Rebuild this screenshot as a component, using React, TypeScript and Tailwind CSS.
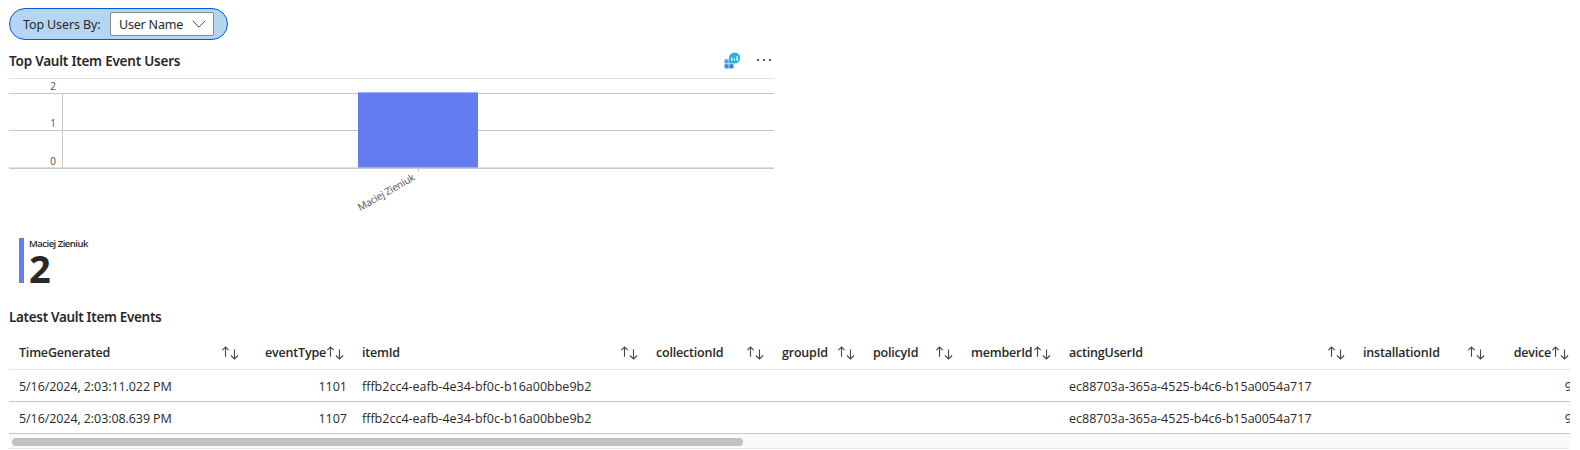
const columns = [
  { name: "TimeGenerated", width: "w-[238px]", numeric: false },
  { name: "eventType", width: "w-[105px]", numeric: true },
  { name: "itemId", width: "w-[294px]", numeric: false },
  { name: "collectionId", width: "w-[126px]", numeric: false },
  { name: "groupId", width: "w-[91px]", numeric: false },
  { name: "policyId", width: "w-[98px]", numeric: false },
  { name: "memberId", width: "w-[98px]", numeric: false },
  { name: "actingUserId", width: "w-[294px]", numeric: false },
  { name: "installationId", width: "w-[140px]", numeric: false },
  { name: "device", width: "w-[84px]", numeric: true },
];

const item = "fffb2cc4-eafb-4e34-bf0c-b16a00bbe9b2";
const user = "ec88703a-365a-4525-b4c6-b15a0054a717";
const rows = [
  ["5/16/2024, 2:03:11.022 PM", "1101", item, "", "", "", "", user, "", "9"],
  ["5/16/2024, 2:03:08.639 PM", "1107", item, "", "", "", "", user, "", "9"],
];

function SortArrows() {
  return (
    <svg width="17" height="14" viewBox="0 0 17 14" fill="none" stroke="#484644" strokeWidth="1.1" className="shrink-0">
      <path d="M3.5 10.7V1M.3 4.2 3.5 1l3.2 3.2" />
      <path d="M12.5 3.5v9.5M8.9 9.5l3.6 3.5 3.6-3.5" />
    </svg>
  );
}

function MetricsIcon() {
  return (
    <svg width="17" height="17" viewBox="0 0 17 17" className="mb-[2px]">
      <rect x="0.5" y="7.3" width="4.2" height="4.2" fill="#5ea0ef" />
      <rect x="0.5" y="12.2" width="4.2" height="4.2" fill="#3d8fe0" />
      <rect x="5.3" y="12.2" width="4.2" height="4.2" fill="#2f83dc" />
      <path d="M10.6.5a5.5 5.5 0 1 1 0 11H5.1V6A5.5 5.5 0 0 1 10.6.5Z" fill="#22b5d8" />
      <path d="M7.8 8.8V5.6M10.4 8.8V6.6M13.1 8.8V4.2" stroke="#e8fbff" strokeWidth="1.4" />
    </svg>
  );
}

function Chart() {
  return (
    <svg width="765" height="140" viewBox="0 0 765 140" className="block">
      <g fill="#c8c8c8">
        <rect y="14" width="765" height="1" />
        <rect y="51" width="765" height="1" />
        <rect y="88" width="765" height="1" fill="#e1e1e1" />
        <rect y="89" width="765" height="1" />
        <rect x="53" y="14" width="1" height="75" />
        <rect x="409" y="90" width="1" height="3" />
      </g>
      <rect x="349" y="13.4" width="120" height="75.1" fill="#637cef" />
      <g fontSize="10" fill="#504e4c" textAnchor="end" className="font-['Open_Sans',sans-serif]">
        <text x="47" y="11">2</text>
        <text x="47" y="48">1</text>
        <text x="47" y="86">0</text>
        <text transform="translate(406.5 100.5) rotate(-30)" letterSpacing="-0.2">Maciej Zieniuk</text>
      </g>
    </svg>
  );
}

export default function App() {
  return (
    <div className="flex h-[450px] w-[1580px] flex-col overflow-hidden bg-white pl-[9px] pr-[10px] pt-2 font-['Open_Sans',sans-serif] text-[12.5px] text-[#292827]">
      <div className="flex h-8 w-[219px] items-center rounded-full border border-[#015cda] bg-[#b4d6f2] pl-[13px] font-['Noto_Sans',sans-serif] tracking-[-0.12px]">
        <span className="w-[87px] whitespace-nowrap pt-[2px]">Top Users By:</span>
        <div className="flex h-6 w-[104px] items-center justify-between rounded-[2px] border border-[#8a8886] bg-white pl-2 pr-[7px]">
          <span className="whitespace-nowrap pt-[2px] tracking-[-0.2px]">User Name</span>
          <svg width="14" height="8" viewBox="0 0 14 8" fill="none" stroke="#484644">
            <path d="M.7.8 7 7.1 13.3.8" />
          </svg>
        </div>
      </div>

      <section className="flex w-[765px] flex-col">
        <header className="flex h-[39px] items-center justify-between border-b border-[#e1e1e1] pt-1">
          <h2 className="font-['Noto_Sans',sans-serif] text-[13.5px] font-semibold tracking-[-0.22px]">Top Vault Item Event Users</h2>
          <div className="flex items-center gap-4 pr-[3px]">
            <MetricsIcon />
            <svg width="14" height="2" fill="#605e5c" className="mb-[2px]">
              <rect width="2" height="2" />
              <rect x="6" width="2" height="2" />
              <rect x="12" width="2" height="2" />
            </svg>
          </div>
        </header>
        <Chart />
        <div className="ml-[10px] mt-[19px] flex h-[45px] border-l-[5px] border-[#637cef] pl-[5px]">
          <div className="flex flex-col">
            <span className="h-[11px] text-[9.5px] font-semibold leading-[11px] tracking-[-0.5px]">Maciej Zieniuk</span>
            <span className="text-[38px] font-bold leading-[39px] tracking-[-1px]">2</span>
          </div>
        </div>
      </section>

      <h2 className="mt-[24px] h-[21px] font-['Noto_Sans',sans-serif] text-[13.5px] font-semibold leading-[21px] tracking-[-0.33px]">
        Latest Vault Item Events
      </h2>

      <section className="mt-[9px] flex w-[1561px] flex-col overflow-hidden">
        <div className="flex h-[33px] w-[1570px] border-b border-[#e5e5e5] font-semibold tracking-[-0.2px]">
          {columns.map((c) => (
            <div key={c.name} className={`flex shrink-0 items-center pl-[10px] pr-[8px] ${c.width} ${c.numeric ? "justify-end" : "justify-between"}`}>
              <span className={c.numeric ? "pr-px" : ""}>{c.name}</span>
              <SortArrows />
            </div>
          ))}
        </div>
        {rows.map((cells) => (
          <div key={cells[0]} className="flex h-8 w-[1570px] border-b border-[#c8c8c8]">
            {cells.map((cell, i) => (
              <div key={columns[i].name} className={`flex shrink-0 items-center whitespace-nowrap pl-[10px] pr-[5px] pt-[3px] ${columns[i].width} ${columns[i].numeric ? "justify-end" : ""}`}>
                <span className={i === 0 ? "tracking-[-0.08px]" : ""}>{cell}</span>
              </div>
            ))}
          </div>
        ))}
        <div className="flex h-[15px] items-start border-b border-[#e8e8e8] bg-[#fafafa] pl-[3px] pt-1">
          <div className="h-2 w-[731px] rounded-full bg-[#c1c1c1]" />
        </div>
      </section>
    </div>
  );
}
